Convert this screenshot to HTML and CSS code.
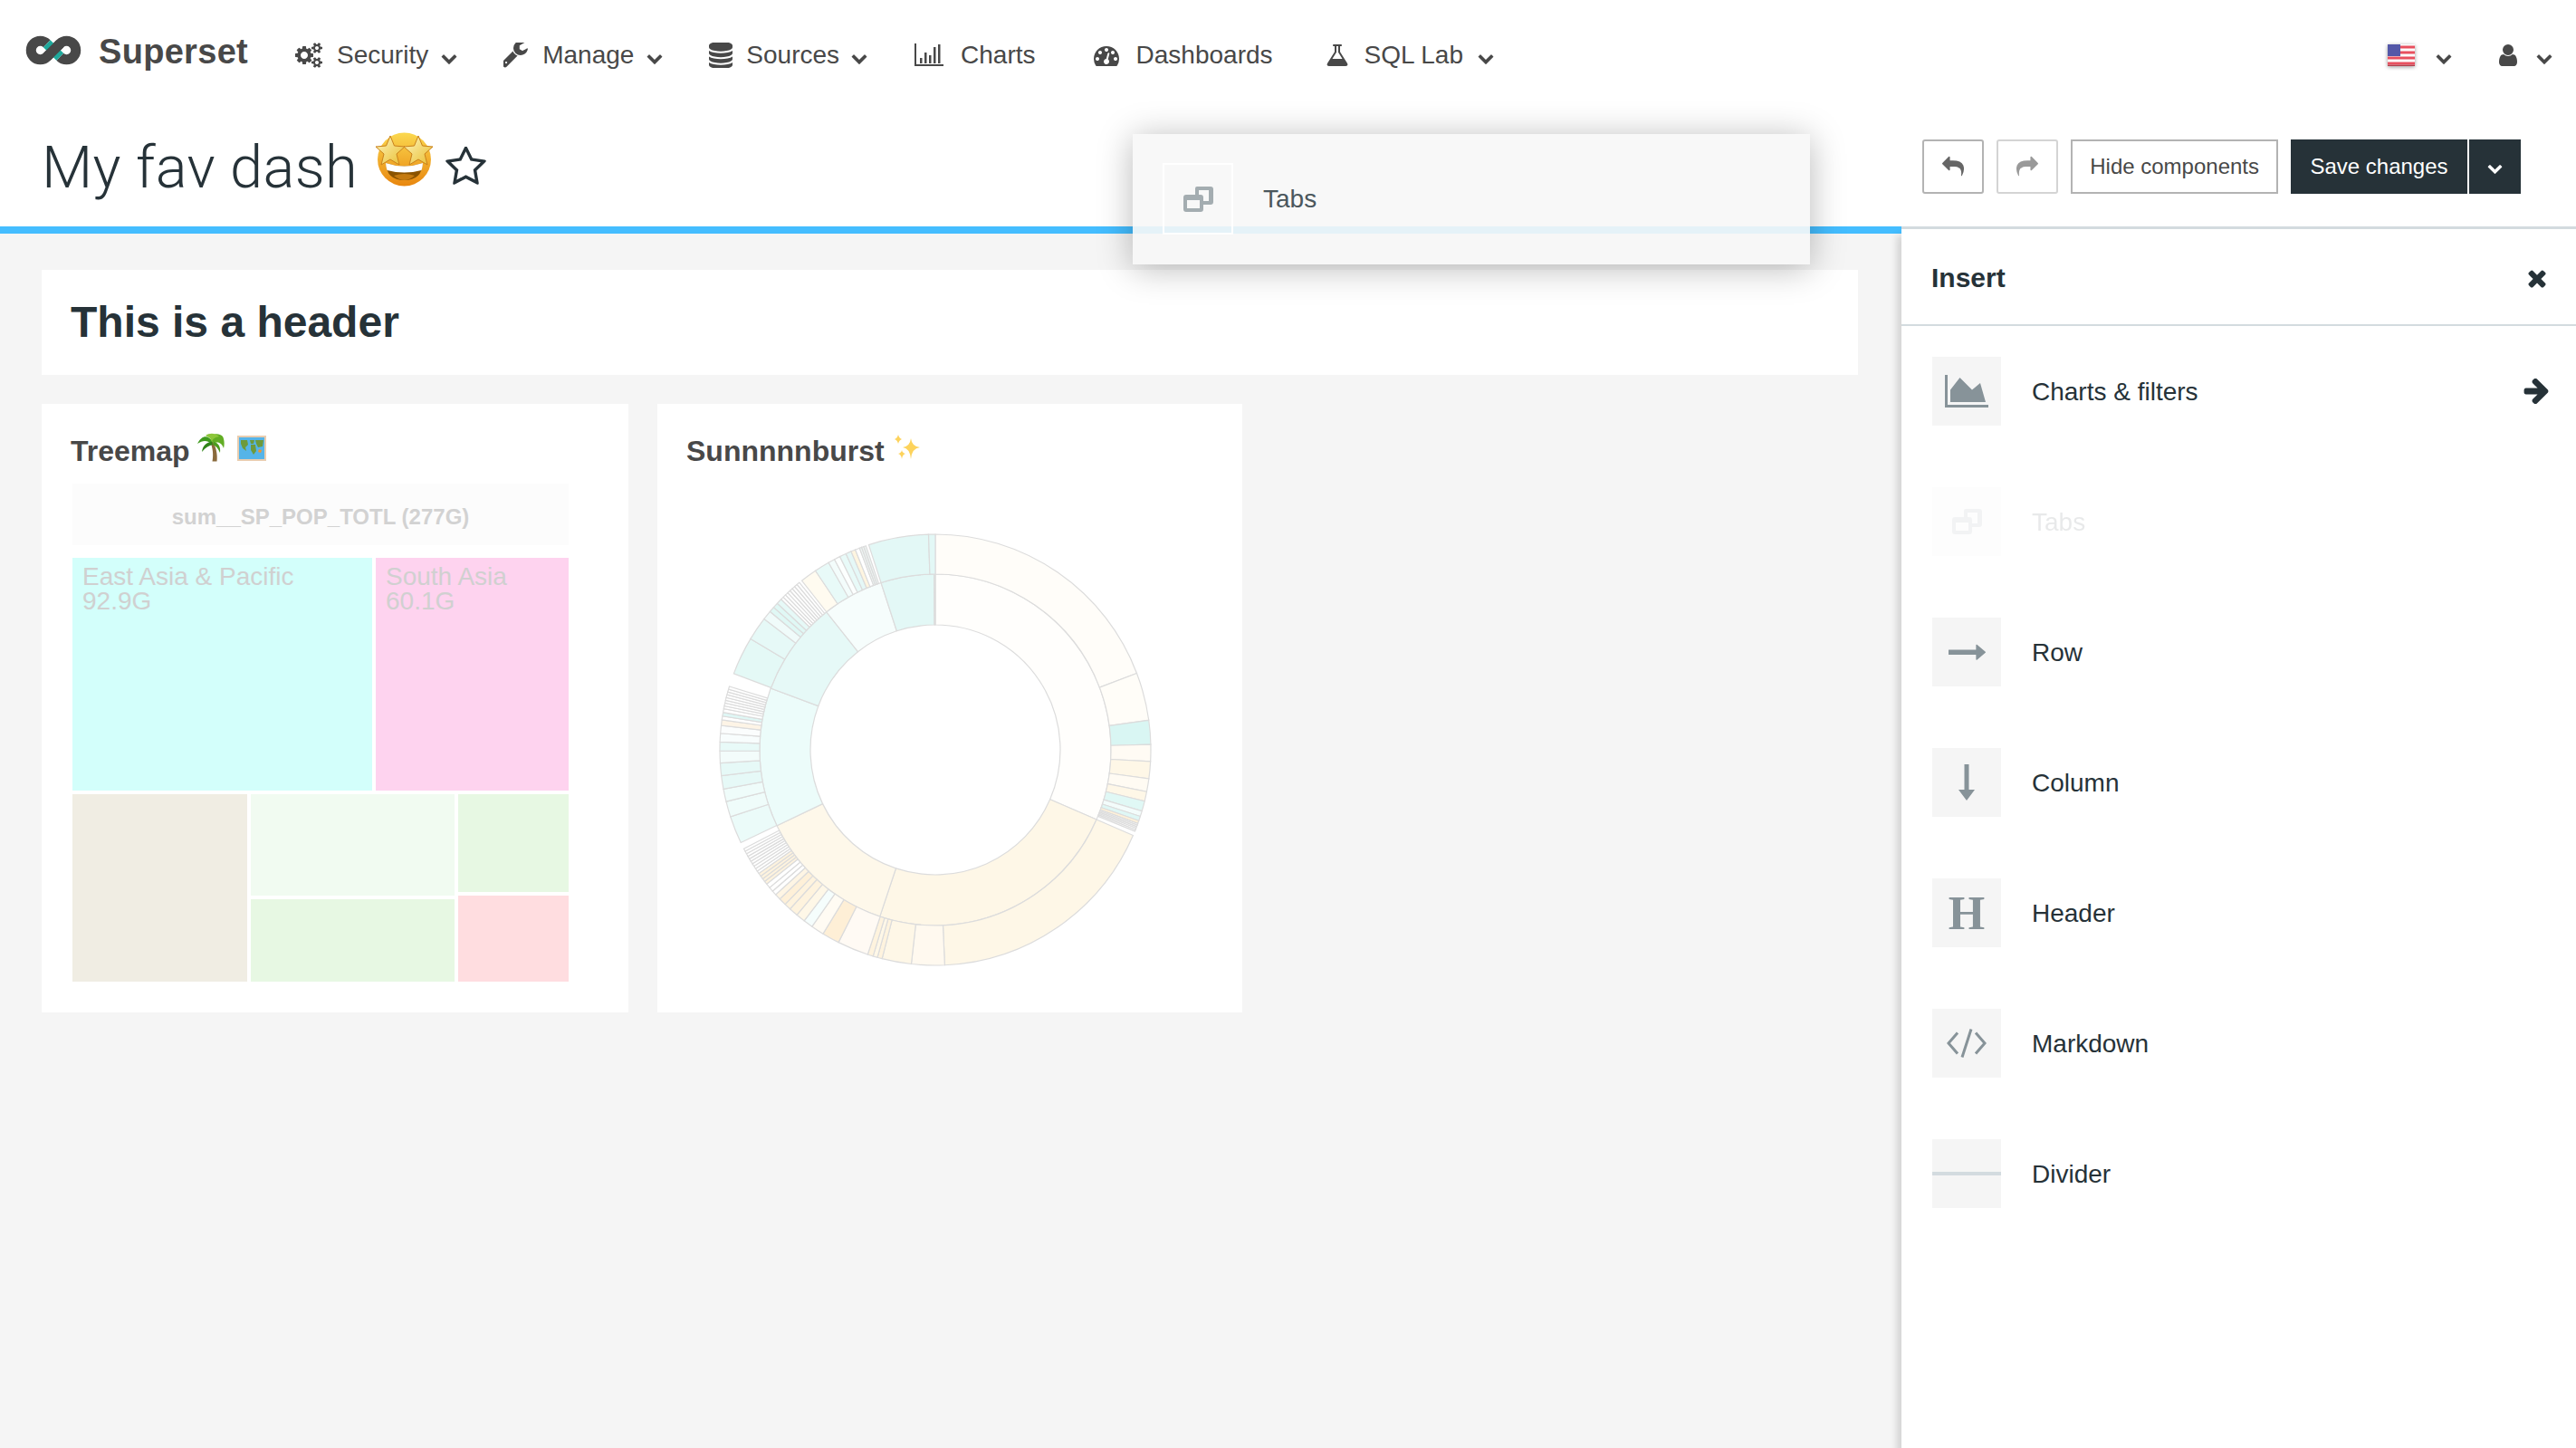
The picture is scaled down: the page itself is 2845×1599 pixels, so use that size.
FILE: index.html
```html
<!DOCTYPE html>
<html lang="en">
<head>
    <meta charset="UTF-8">
    <title>My fav dash - Superset</title>
    <link rel="stylesheet" href="styles.css">
</head>
<body>
    <svg class="sprite" xmlns="http://www.w3.org/2000/svg">
        <symbol id="i-chevron" viewBox="100 220 1592 1350"><path d="M1683 808l-742 741q-19 19-45 19t-45-19l-742-741q-19-19-19-45.5t19-45.5l166-165q19-19 45-19t45 19l531 531 531-531q19-19 45-19t45 19l166 165q19 19 19 45.5t-19 45.5z"/></symbol>
        <symbol id="i-tabs" viewBox="0 0 33 28"><path d="M15 0h15a3 3 0 0 1 3 3v14a3 3 0 0 1-3 3h-8v-4h6V4H17v5h-4V2a2 2 0 0 1 2-2z"/><path fill-rule="evenodd" d="M3 9h16a3 3 0 0 1 3 3v13a3 3 0 0 1-3 3H3a3 3 0 0 1-3-3V12a3 3 0 0 1 3-3zm1 6v9h14v-9z"/></symbol>
    </svg>

    <nav class="navbar">
        <a class="brand">
            <svg class="brand-logo" viewBox="0 0 62 33">
                <path d="M38.25 23.75A10.25 10.25 0 1 0 38.25 9.25L23.75 23.75A10.25 10.25 0 1 1 23.75 9.25" fill="none" stroke="#484848" stroke-width="11"/>
                <path d="M23.75 9.25L38.25 23.75" fill="none" stroke="#1fa99c" stroke-width="11"/>
                <path d="M38.25 9.25L23.75 23.75" fill="none" stroke="#484848" stroke-width="11"/>
            </svg>
            <span class="brand-name">Superset</span>
        </a>
        <a class="nav-item">
            <svg class="nav-icon" width="30" height="28" viewBox="0 0 1920 1792"><path d="M896 896q0-106-75-181t-181-75-181 75-75 181 75 181 181 75 181-75 75-181zm768 512q0-52-38-90t-90-38-90 38-38 90q0 53 37.5 90.5t90.5 37.5 90.5-37.5 37.5-90.5zm0-1024q0-52-38-90t-90-38-90 38-38 90q0 53 37.5 90.5t90.5 37.5 90.5-37.5 37.5-90.5zm-384 421v185q0 10-7 19.5t-16 10.5l-155 24q-11 35-32 76 34 48 90 115 7 11 7 20 0 12-7 19-23 30-82.5 89.5t-78.5 59.5q-11 0-21-7l-115-90q-37 19-77 31-11 108-23 155-7 24-30 24h-186q-11 0-20-7.5t-10-17.5l-23-153q-34-10-75-31l-118 89q-7 7-20 7-11 0-21-8-144-133-144-160 0-9 7-19 10-14 41-53t47-61q-23-44-35-82l-152-24q-10-1-17-9.5t-7-19.5v-185q0-10 7-19.5t16-10.5l155-24q11-35 32-76-34-48-90-115-7-11-7-20 0-12 7-20 22-30 82-89t79-59q11 0 21 7l115 90q34-18 77-32 11-108 23-154 7-24 30-24h186q11 0 20 7.5t10 17.5l23 153q34 10 75 31l118-89q8-7 20-7 11 0 21 8 144 133 144 160 0 8-7 19-12 16-42 54t-45 60q23 48 34 82l152 23q10 2 17 10.5t7 19.5zm640 533v140q0 16-149 31-12 27-30 52 51 113 51 138 0 4-4 7-122 71-124 71-8 0-46-47t-52-68q-20 2-30 2t-30-2q-14 21-52 68t-46 47q-2 0-124-71-4-3-4-7 0-25 51-138-18-25-30-52-149-15-149-31v-140q0-16 149-31 13-29 30-52-51-113-51-138 0-4 4-7 4-2 35-20t59-34 30-16q8 0 46 46.5t52 67.5q20-2 30-2t30 2q51-71 92-112l6-2q4 0 124 70 4 3 4 7 0 25-51 138 17 23 30 52 149 15 149 31zm0-1024v140q0 16-149 31-12 27-30 52 51 113 51 138 0 4-4 7-122 71-124 71-8 0-46-47t-52-68q-20 2-30 2t-30-2q-14 21-52 68t-46 47q-2 0-124-71-4-3-4-7 0-25 51-138-18-25-30-52-149-15-149-31v-140q0-16 149-31 13-29 30-52-51-113-51-138 0-4 4-7 4-2 35-20t59-34 30-16q8 0 46 46.5t52 67.5q20-2 30-2t30 2q51-71 92-112l6-2q4 0 124 70 4 3 4 7 0 25-51 138 17 23 30 52 149 15 149 31z"/></svg>
            <span>Security</span>
            <svg class="caret"><use href="#i-chevron"/></svg>
        </a>
        <a class="nav-item">
            <svg class="nav-icon" width="27" height="28" viewBox="150 130 1520 1520"><path d="M384 1344q0-26-19-45t-45-19-45 19-19 45 19 45 45 19 45-19 19-45zm644-420l-682 682q-37 37-90 37-52 0-91-37l-106-108q-38-36-38-90 0-53 38-91l681-681q39 98 114.5 173.5t173.5 114.5zm634-435q0 39-23 106-47 134-164.5 217.5t-258.5 83.5q-185 0-316.5-131.5t-131.5-316.5 131.5-316.5 316.5-131.5q58 0 121.5 16.5t107.5 46.5q16 11 16 28t-16 28l-293 169v224l193 107q5-3 79-48.5t135.5-81 70.5-35.5q15 0 23.5 10t8.5 25z"/></svg>
            <span>Manage</span>
            <svg class="caret"><use href="#i-chevron"/></svg>
        </a>
        <a class="nav-item nav-db">
            <svg class="nav-icon" width="26" height="28" viewBox="128 128 1536 1536"><path d="M896 768q237 0 443-43t325-127v170q0 69-103 128t-280 93.5-385 34.5-385-34.5-280-93.5-103-128v-170q119 84 325 127t443 43zm0 768q237 0 443-43t325-127v170q0 69-103 128t-280 93.5-385 34.5-385-34.5-280-93.5-103-128v-170q119 84 325 127t443 43zm0-384q237 0 443-43t325-127v170q0 69-103 128t-280 93.5-385 34.5-385-34.5-280-93.5-103-128v-170q119 84 325 127t443 43zm0-1152q208 0 385 34.5t280 93.5 103 128v128q0 69-103 128t-280 93.5-385 34.5-385-34.5-280-93.5-103-128v-128q0-69 103-128t280-93.5 385-34.5z"/></svg>
            <span>Sources</span>
            <svg class="caret"><use href="#i-chevron"/></svg>
        </a>
        <a class="nav-item nav-plain">
            <svg class="nav-icon" width="32" height="25" viewBox="0 0 32 25"><path d="M0 0h2v23h30v2H0z"/><path d="M6 16h2.500v6H6zM11 10h2.500v12H11zM16 13h2.500v9H16zM21 4h2.500v18H21zM26 1h2.500v21H26z"/></svg>
            <span>Charts</span>
        </a>
        <a class="nav-item nav-plain">
            <svg class="nav-icon" width="28" height="24" viewBox="0 128 1792 1536"><path d="M384 1152q0-53-37.5-90.5t-90.5-37.5-90.5 37.5-37.5 90.5 37.5 90.5 90.5 37.5 90.5-37.5 37.5-90.5zm192-448q0-53-37.5-90.5t-90.5-37.5-90.5 37.5-37.5 90.5 37.5 90.5 90.5 37.5 90.5-37.5 37.5-90.5zm428 481l101-382q6-26-7.5-48.5t-38.5-29.5-48 6.5-30 39.5l-101 382q-60 5-107 43.5t-63 98.5q-20 77 20 146t117 89 146-20 89-117q16-60-6-117t-72-91zm660-33q0-53-37.5-90.5t-90.5-37.5-90.5 37.5-37.5 90.5 37.5 90.5 90.5 37.5 90.5-37.5 37.5-90.5zm-640-640q0-53-37.5-90.5t-90.5-37.5-90.5 37.5-37.5 90.5 37.5 90.5 90.5 37.5 90.5-37.5 37.5-90.5zm448 192q0-53-37.5-90.5t-90.5-37.5-90.5 37.5-37.5 90.5 37.5 90.5 90.5 37.5 90.5-37.5 37.5-90.5zm320 448q0 261-141 483-19 29-54 29h-1402q-35 0-54-29-141-221-141-483 0-182 71-348t191-286 286-191 348-71 348 71 286 191 191 286 71 348z"/></svg>
            <span>Dashboards</span>
        </a>
        <a class="nav-item nav-lab">
            <svg class="nav-icon" width="24" height="26" viewBox="130 128 1532 1536"><path d="M1591 1448q56 89 21.500 152.500t-140.500 63.500h-1152q-106 0-140.500-63.500t21.500-152.500l503-793v-399h-64q-26 0-45-19t-19-45 19-45 45-19h512q26 0 45 19t19 45-19 45-45 19h-64v399zm-779-725l-272 429h712l-272-429-20-31v-437h-128v437z"/></svg>
            <span>SQL Lab</span>
            <svg class="caret"><use href="#i-chevron"/></svg>
        </a>
        <a class="nav-item nav-lang">
            <svg class="flag" width="30" height="24" viewBox="0 0 30 24">
                <rect width="30" height="24" fill="#fdfdfd"/>
                <path d="M0 1.500h30v3H0zM0 7.500h30v3H0zM0 13.500h30v3H0zM0 19.500h30v3H0z" fill="#e8505f"/>
                <rect width="14" height="13" fill="#5458a8"/>
                <rect y="22.500" width="30" height="1.500" fill="#b33d4a"/>
            </svg>
            <svg class="caret"><use href="#i-chevron"/></svg>
        </a>
        <a class="nav-item nav-user">
            <svg class="nav-icon" width="20" height="24" viewBox="256 128 1280 1536"><path d="M1536 1399q0 109-62.500 187t-150.500 78h-854q-88 0-150.500-78t-62.500-187q0-85 8.500-160.500t31.500-152 58.500-131 94-89 134.500-34.500q131 128 313 128t313-128q76 0 134.500 34.500t94 89 58.500 131 31.500 152 8.500 160.500zm-256-887q0 159-112.500 271.500t-271.500 112.500-271.500-112.500-112.500-271.500 112.500-271.500 271.500-112.500 271.500 112.500 112.500 271.500z"/></svg>
            <svg class="caret"><use href="#i-chevron"/></svg>
        </a>
    </nav>

    <header class="dash-header">
        <div class="dash-title">
            <h1>My fav dash</h1>
            <svg class="emoji-face" width="63" height="60" viewBox="0 0 63 60">
                <defs>
                    <linearGradient id="face" x1="0" y1="0" x2="0" y2="1"><stop offset="0" stop-color="#fbd84f"/><stop offset="1" stop-color="#e8860e"/></linearGradient>
                    <linearGradient id="starfill" x1="0" y1="0" x2="1" y2="1"><stop offset="0" stop-color="#fdf6c0"/><stop offset="1" stop-color="#e9bd2e"/></linearGradient>
                </defs>
                <circle cx="31.500" cy="30" r="29.500" fill="url(#face)"/>
                <path d="M11 34Q31.500 41 52 34Q51 53 31.500 53Q12 53 11 34Z" fill="#8a5300"/>
                <path d="M11 34Q31.500 41 52 34Q52 38 50.500 42Q31.500 47 12.500 42Q11 38 11 34Z" fill="#fff"/>
                <path d="M20 48Q31.500 44 43 48Q37 53 31.500 53Q26 53 20 48Z" fill="#c47a10"/>
                <path d="M16 4L20.500 15 32 16 23 24 26 36 16 30 6 36 9 24 0 16 11.500 15Z" fill="url(#starfill)" stroke="#c9811c" stroke-width="1"/>
                <path d="M47 4L51.500 15 63 16 54 24 57 36 47 30 37 36 40 24 31 16 42.500 15Z" fill="url(#starfill)" stroke="#c9811c" stroke-width="1"/>
            </svg>
            <svg class="star-icon" width="45" height="43" viewBox="0 64 1664 1600"><path d="M1137 1004l306-297-422-62-189-382-189 382-422 62 306 297-73 421 378-199 377 199zm527-357q0 22-26 48l-363 354 86 500q1 7 1 20 0 50-41 50-19 0-40-12l-449-236-449 236q-22 12-40 12-21 0-31.500-14.500t-10.500-35.500q0-6 2-20l86-500-364-354q-25-27-25-48 0-37 56-46l502-73 225-455q19-41 49-41t49 41l225 455 502 73q56 9 56 46z"/></svg>
        </div>
        <div class="dash-actions">
            <button class="btn btn-icon"><svg width="24" height="24" viewBox="0 128 1792 1536"><path d="M1792 1120q0 166-127 451-3 7-10.500 24t-13.500 30-13 22q-12 17-28 17-15 0-23.500-10t-8.500-25q0-9 2.500-26.500t2.500-23.500q5-68 5-123 0-101-17.500-181t-48.500-138.500-80-101-105.500-69.500-133-42.500-154-21.500-175.500-6h-224v256q0 26-19 45t-45 19-45-19l-512-512q-19-19-19-45t19-45l512-512q19-19 45-19t45 19 19 45v256h224q713 0 875 403 53 134 53 333z"/></svg></button>
            <button class="btn btn-icon btn-off"><svg class="flip" width="24" height="24" viewBox="0 128 1792 1536"><path d="M1792 1120q0 166-127 451-3 7-10.500 24t-13.500 30-13 22q-12 17-28 17-15 0-23.500-10t-8.500-25q0-9 2.500-26.500t2.500-23.500q5-68 5-123 0-101-17.500-181t-48.500-138.500-80-101-105.500-69.500-133-42.500-154-21.500-175.500-6h-224v256q0 26-19 45t-45 19-45-19l-512-512q-19-19-19-45t19-45l512-512q19-19 45-19t45 19 19 45v256h224q713 0 875 403 53 134 53 333z"/></svg></button>
            <button class="btn">Hide components</button>
            <div class="save-group">
                <button class="btn-save">Save changes</button>
                <button class="btn-save-more"><svg class="caret-small"><use href="#i-chevron"/></svg></button>
            </div>
        </div>
    </header>

    <div class="drag-preview">
        <div class="drag-icon"><svg width="33" height="28"><use href="#i-tabs"/></svg></div>
        <span>Tabs</span>
    </div>

    <div class="builder">
        <main class="grid">
            <div class="header-block">This is a header</div>
            <div class="chart-row">
                <section class="slice">
                    <h2 class="slice-title">Treemap
                        <svg class="emoji-palm" width="30" height="32" viewBox="0 0 30 32">
                            <path d="M14 10C17 16 18 24 16.500 31.500L21.500 31.500C22.500 24 20.500 15 17 10Z" fill="#8a6a3c"/>
                            <path d="M17 10C12 2 5 2 0 12 6 8 11 8 15 12Z" fill="#3f9a1e"/>
                            <path d="M16 9C14 1 23 -1 28 4 30 8 30 13 29 17 27 11 22 9 18 12Z" fill="#62ad24"/>
                            <path d="M16 10C10 10 6 14 5 21 9 16 13 14 17 13Z" fill="#2f8418"/>
                            <path d="M18 10C23 11 26 15 25 22 23 17 20 14 17 13Z" fill="#4c9c1e"/>
                            <path d="M9 3C13 0 20 0 24 4 20 5 17 6 16 10 15 6 13 5 9 3Z" fill="#8cc63a"/>
                        </svg>
                        <svg class="emoji-map" width="32" height="28" viewBox="0 0 32 28">
                            <rect width="32" height="28" fill="#e9cdb0"/>
                            <rect x="2" y="2" width="28" height="24" fill="#55b4e8"/>
                            <path d="M4 5h7l1 5-3 3 1 4-4-3-2-5zM14 5h5l-1 4-3 0zM15 10h5l1 7-3 4-3-5zM20 5h9l-1 7-5 1-2-4z" fill="#6d9a3c"/>
                            <path d="M24 15l3 1-1 3-3-1z" fill="#f0952c"/>
                        </svg>
                    </h2>
                    <div class="treemap">
                        <div class="treemap-title">sum__SP_POP_TOTL (277G)</div>
                        <div class="treemap-row-top">
                            <div class="cell cell-cyan">East Asia &amp; Pacific<br>92.9G</div>
                            <div class="cell cell-pink">South Asia<br>60.1G</div>
                        </div>
                        <div class="treemap-row-bottom">
                            <div class="cell cell-beige"></div>
                            <div class="treemap-col col-mid">
                                <div class="cell cell-mint mid-a"></div>
                                <div class="cell cell-green mid-b"></div>
                            </div>
                            <div class="treemap-col col-end">
                                <div class="cell cell-green end-a"></div>
                                <div class="cell cell-rose end-b"></div>
                            </div>
                        </div>
                    </div>
                </section>
                <section class="slice slice-sun">
                    <h2 class="slice-title">Sunnnnnburst
                        <svg class="emoji-spark" width="28" height="28" viewBox="0 0 28 28">
                            <path d="M18 4Q19 13 28 14Q19 15 18 27Q17 15 9 14Q17 13 18 4Z" fill="#fdd35c"/>
                            <path d="M4 0Q5 4 8 5Q5 6 4 10Q3 6 0 5Q3 4 4 0Z" fill="#fdd35c"/>
                            <path d="M8 17Q8.500 20 12 21Q8.500 22 8 27Q7.500 22 4 21Q7.500 20 8 17Z" fill="#fdd35c"/>
                        </svg>
                    </h2>
                    <svg id="sunburst" class="sunburst" width="480" height="480" viewBox="-240 -240 480 480"></svg>
                </section>
            </div>
        </main>

        <aside class="insert-panel">
            <div class="panel-head">
                <span>Insert</span>
                <svg width="24" height="24" viewBox="150 200 1492 1392"><path d="M1490 1322q0 40-28 68l-136 136q-28 28-68 28t-68-28l-294-294-294 294q-28 28-68 28t-68-28l-136-136q-28-28-28-68t28-68l294-294-294-294q-28-28-28-68t28-68l136-136q28-28 68-28t68 28l294 294 294-294q28-28 68-28t68 28l136 136q28 28 28 68t-28 68l-294 294 294 294q28 28 28 68z" fill="#263238"/></svg>
            </div>
            <ul class="panel-list">
                <li class="panel-item">
                    <div class="panel-icon"><svg width="48" height="38" viewBox="0 128 2048 1536"><path d="M2048 1536v128h-2048v-1536h128v1408h1920zm-384-1024l256 896h-1664v-576l448-576 576 576z"/></svg></div>
                    <span>Charts &amp; filters</span>
                    <svg class="panel-arrow" width="28" height="28" viewBox="128 128 1472 1536"><path d="M1600 960q0 54-37 91l-651 651q-39 37-91 37-51 0-90-37l-75-75q-38-38-38-91t38-91l293-293h-704q-52 0-84.500-37.500t-32.500-90.500v-128q0-53 32.500-90.500t84.500-37.500h704l-293-294q-38-36-38-90t38-90l75-75q38-38 90-38 53 0 91 38l651 651q37 35 37 90z" transform="translate(0 -64)"/></svg>
                </li>
                <li class="panel-item panel-faded">
                    <div class="panel-icon"><svg width="33" height="28"><use href="#i-tabs"/></svg></div>
                    <span>Tabs</span>
                </li>
                <li class="panel-item">
                    <div class="panel-icon"><svg width="41" height="18" viewBox="0 480 1728 810" preserveAspectRatio="none"><path d="M1728 893q0 14-10 24l-384 354q-16 14-35 6-19-9-19-29v-224h-1248q-14 0-23-9t-9-23v-192q0-14 9-23t23-9h1248v-224q0-21 19-29t35 5l384 350q10 10 10 23z"/></svg></div>
                    <span>Row</span>
                </li>
                <li class="panel-item">
                    <div class="panel-icon"><svg width="18" height="40" viewBox="0 0 18 40"><path d="M6.500 0h5v28H18l-9 12-9-12h6.500z"/></svg></div>
                    <span>Column</span>
                </li>
                <li class="panel-item">
                    <div class="panel-icon panel-h">H</div>
                    <span>Header</span>
                </li>
                <li class="panel-item">
                    <div class="panel-icon"><svg width="44" height="32" viewBox="0 0 44 32"><path d="M12 4.500L2 16l10 11.500M32 4.500L42 16 32 27.500M27 0.500L17 31.500" fill="none" stroke="#879399" stroke-width="3"/></svg></div>
                    <span>Markdown</span>
                </li>
                <li class="panel-item">
                    <div class="panel-icon panel-divider"></div>
                    <span>Divider</span>
                </li>
            </ul>
        </aside>
    </div>

    <script src="sunburst.js"></script>
</body>
</html>
```

FILE: styles.css
```css
* {
    box-sizing: border-box;
}
html, body {
    margin: 0;
    height: 100%;
    overflow: hidden;
}
body {
    position: relative;
    font-family: "Liberation Sans", Arial, sans-serif;
    font-size: 28px;
    color: #484848;
    background: #f5f5f5;
}
.sprite {
    position: absolute;
    width: 0;
    height: 0;
}

/* top nav */
.navbar {
    display: flex;
    align-items: center;
    height: 125px;
    padding: 0 25px 4px 28px;
    background: #fff;
}
.brand {
    display: flex;
    align-items: center;
    gap: 19px;
    margin: 0 52px 10px 0;
}
.brand-logo {
    width: 62px;
    height: 33px;
}
.brand-name {
    padding-top: 3px;
    font-size: 38px;
    font-weight: bold;
    letter-spacing: 0.3px;
}
.nav-item {
    display: flex;
    align-items: center;
    gap: 16px;
    margin-right: 50px;
    white-space: nowrap;
}
.nav-item svg {
    fill: #484848;
    flex: none;
}
.caret {
    width: 20px;
    height: 14px;
    margin: 6px 0 0 -3px;
}
.nav-db {
    gap: 15px;
    margin-right: 51px;
}
.nav-plain {
    gap: 19px;
    padding-right: 14px;
}
.nav-lab {
    gap: 18px;
    margin-left: -5px;
}
.nav-lang {
    margin: 0 51px 0 auto;
    gap: 25px;
}
.nav-user {
    gap: 23px;
    margin-right: 0;
}
.flag {
    filter: drop-shadow(0 1px 2px rgba(0,0,0,0.4));
}

/* dashboard title row */
.dash-header {
    display: flex;
    justify-content: space-between;
    height: 125px;
    padding: 23px 61px 0 46px;
    background: #fff;
}
.dash-title {
    display: flex;
    align-items: center;
    height: 64px;
}
.dash-title h1 {
    margin: 9px 0 0;
    font-family: Roboto, "Liberation Sans", sans-serif;
    font-size: 65px;
    font-weight: 300;
    letter-spacing: 0.3px;
    color: #263238;
    white-space: nowrap;
}
.emoji-face {
    margin: -8px 0 0 20px;
}
.star-icon {
    margin: 6px 0 0 14px;
    fill: #263238;
}
.dash-actions {
    display: flex;
    gap: 14px;
    padding-top: 6px;
}
.btn {
    height: 60px;
    padding: 0 19px;
    background: #fff;
    border: 2px solid #b3b3b3;
    font-family: "Liberation Sans", Arial, sans-serif;
    font-size: 24px;
    color: #484848;
}
.btn-icon {
    width: 68px;
    padding: 0;
    border-radius: 3px;
}
.btn-icon svg {
    display: block;
    margin: 0 auto;
    fill: #666;
}
.btn-off {
    border-color: #d4d4d4;
}
.btn-off svg {
    fill: #999;
}
.flip {
    transform: scaleX(-1);
}
.save-group {
    display: flex;
}
.btn-save, .btn-save-more {
    height: 60px;
    border: 0;
    background: #263238;
    color: #fff;
    font-family: "Liberation Sans", Arial, sans-serif;
    font-size: 24px;
}
.btn-save {
    width: 197px;
    padding: 0;
    border-right: 2px solid #fff;
}
.btn-save-more {
    width: 57px;
    padding: 0;
}
.caret-small {
    display: block;
    width: 19px;
    height: 13px;
    margin: 3px auto 0;
    fill: #fff;
}

/* dragged component, floats over everything */
.drag-preview {
    position: absolute;
    left: 1251px;
    top: 148px;
    z-index: 5;
    display: flex;
    align-items: center;
    gap: 33px;
    width: 748px;
    height: 144px;
    padding: 32px 33px 33px;
    background: rgba(247,247,247,0.9);
    box-shadow: 0 4px 36px rgba(0,0,0,0.28);
    color: #4b575d;
}
.drag-icon {
    display: flex;
    align-items: center;
    justify-content: center;
    width: 78px;
    height: 79px;
    border: 2px solid #fff;
    fill: #a4adb1;
}
.drag-preview span {
    margin-top: 1px;
}

/* layout under the header */
.builder {
    display: flex;
    height: 1349px;
    border-top: 8px solid #44bdff;
}
.grid {
    flex: none;
    width: 2100px;
    padding: 40px 48px 0 46px;
}
.header-block {
    height: 116px;
    padding-left: 32px;
    background: #fff;
    font-size: 48px;
    font-weight: bold;
    line-height: 116px;
    color: #263238;
}
.chart-row {
    display: flex;
    gap: 32px;
    margin-top: 32px;
}
.slice {
    width: 648px;
    height: 672px;
    padding: 32px 32px 0;
    background: #fff;
}
.slice-sun {
    width: 646px;
}
.slice-title {
    display: flex;
    align-items: center;
    height: 40px;
    margin: 0;
    font-size: 32px;
    font-weight: bold;
    color: #484848;
}
.emoji-palm {
    margin: -8px 0 0 8px;
}
.emoji-map {
    margin: -6px 0 0 14px;
}
.emoji-spark {
    margin: -8px 0 0 11px;
}

/* treemap */
.treemap {
    width: 548px;
    margin: 16px 0 0 2px;
}
.treemap-title {
    height: 68px;
    background: #fcfcfc;
    font-size: 24px;
    font-weight: bold;
    line-height: 74px;
    text-align: center;
    color: #d2d2d2;
}
.treemap-row-top {
    display: flex;
    gap: 4px;
    height: 257px;
    margin-top: 14px;
}
.treemap-row-bottom {
    display: flex;
    gap: 4px;
    height: 207px;
    margin-top: 4px;
}
.treemap-col {
    display: flex;
    flex-direction: column;
    gap: 4px;
}
.cell {
    padding: 7px 11px;
    font-size: 28px;
    line-height: 27px;
    color: #d0d0d0;
}
.cell-cyan {
    width: 331px;
    background: #d3fffb;
}
.cell-pink {
    width: 213px;
    background: #fed3ef;
}
.cell-beige {
    width: 193px;
    background: #f0ede3;
}
.cell-mint {
    background: #f1fbf1;
}
.cell-green {
    background: #e7f8e3;
}
.cell-rose {
    background: #ffdde0;
}
.col-mid {
    width: 225px;
}
.col-end {
    width: 122px;
}
.mid-a {
    height: 112px;
}
.mid-b {
    height: 91px;
}
.end-a {
    height: 108px;
}
.end-b {
    height: 95px;
}

/* sunburst */
.sunburst {
    display: block;
    margin: 70px 0 0 35px;
}
.sunburst path {
    stroke: #dcdcdc;
    stroke-width: 1.2;
}

/* insert panel */
.insert-panel {
    position: relative;
    flex: none;
    width: 745px;
    margin-top: -8px;
    background: #fff;
    border-top: 3px solid #d3dbdf;
    box-shadow: -5px 10px 8px rgba(0,0,0,0.14);
}
.panel-head {
    display: flex;
    align-items: center;
    justify-content: space-between;
    height: 107px;
    padding: 2px 31px 0 33px;
    border-bottom: 2px solid #d3dbdf;
    font-size: 30px;
    font-weight: bold;
    color: #263238;
}
.panel-list {
    list-style: none;
    margin: 0;
    padding: 34px 30px 0 34px;
}
.panel-item {
    display: flex;
    align-items: center;
    gap: 34px;
    height: 76px;
    margin-bottom: 68px;
    color: #263238;
}
.panel-item > span {
    padding-top: 2px;
}
.panel-icon {
    display: flex;
    align-items: center;
    justify-content: center;
    width: 76px;
    height: 76px;
    background: #f5f5f5;
    fill: #879399;
}
.panel-arrow {
    margin-left: auto;
    fill: #263238;
}
.panel-faded {
    opacity: 0.1;
}
.panel-h {
    font-family: "Liberation Serif", serif;
    font-size: 52px;
    font-weight: bold;
    color: #879399;
}
.panel-divider {
    background: linear-gradient(#f5f5f5 36px, #d3dbdf 36px, #d3dbdf 40px, #f5f5f5 40px);
}
```

FILE: sunburst.js
```js
// [from, to, color, count] in degrees, clockwise from the top
var inner = [
    [0, 113.4, '#fffefc'], [113.4, 198.4, '#fef7e7'], [198.4, 244.4, '#fef8ea'],
    [244.4, 290.5, '#ecfcfa'], [290.5, 321.7, '#e6f9f7'], [321.7, 342, '#f6fdfc'],
    [342, 359.6, '#e3f8f6'], [359.6, 360, '#e3f8f6']
];
var outer = [
    [0, 69.2, '#fffdf9'], [69.2, 82.1, '#fffdf8'], [82.1, 88.6, '#d9f6f3'], [88.6, 93.1, '#fffbf4'],
    [93.1, 97.7, '#fef7e7'], [97.7, 101.2, '#fffbf3'], [101.2, 103.8, '#fef7e7'], [103.8, 106.5, '#e0f8f5'],
    [106.5, 108, '#f3fcfb'], [108, 109.2, '#dff7f5'], [109.2, 110, '#fef0d8'], [110, 112.2, '#fff', 5],

    [113.4, 177.5, '#fef7e7'], [177.5, 186.4, '#fff9ef'], [186.4, 194.3, '#fef7e7'], [194.3, 195.6, '#fef3de'],
    [195.6, 196.8, '#fef7e7'], [196.8, 198.3, '#fef3de'], [198.3, 206.7, '#fffaf4'], [206.7, 211.4, '#feefd6'],
    [211.4, 214.9, '#fffbf3'], [214.9, 217.5, '#f5fdfc'], [217.5, 220, '#fef7e7'], [220, 222.4, '#fef3de'],
    [222.4, 224.2, '#fef3de'], [224.2, 226.2, '#fef0d8'], [226.2, 227.8, '#fef5e4'], [227.8, 231.5, '#fff', 3],
    [231.5, 235, '#fef3de', 4], [235, 242.7, '#fff', 10],

    [244.5, 251.9, '#ebfbf9'], [251.9, 256.1, '#effcfa'], [256.1, 259.5, '#effcfa'], [259.5, 263.1, '#e6f9f7'],
    [263.1, 266.5, '#e6f9f7'], [266.5, 269.7, '#f3fcfb'], [269.7, 272.1, '#e8faf8'], [272.1, 274.4, '#f8fdfd'],
    [274.4, 276.5, '#fbfdfd'], [276.5, 278, '#fdf4e6'], [278, 279, '#fff'], [279, 280, '#dff7f5'],
    [280, 281, '#fff'], [281, 287.1, '#fff', 8],

    [290.7, 301, '#e4f9f6'], [301, 307.4, '#e6f9f7'], [307.4, 309.9, '#f0fbfa'], [309.9, 311.4, '#e0f8f5'],
    [311.4, 312.8, '#e0f8f5'], [312.8, 314.3, '#e6f9f7'], [314.3, 320.9, '#fff', 8],

    [321.7, 326.2, '#fffbf0'], [326.2, 330.3, '#e8faf8'], [330.3, 332.1, '#f3fcfb'], [332.1, 333.7, '#fcfffe'],
    [333.7, 335.5, '#e8faf8'], [335.5, 337, '#e5f8f7'], [337, 338.2, '#fef5e0'], [338.2, 339.4, '#fff'],
    [339.4, 341.2, '#eef5f3', 3],

    [342, 358.2, '#e3f8f6'], [358.2, 360, '#e3f8f6']
];

function point(r, deg) {
    var a = deg * Math.PI / 180;
    return (r * Math.sin(a)).toFixed(2) + ' ' + (-r * Math.cos(a)).toFixed(2);
}

function arcPath(r0, r1, from, to) {
    var large = to - from > 180 ? 1 : 0;
    return 'M' + point(r0, from) + 'L' + point(r1, from) +
        'A' + r1 + ' ' + r1 + ' 0 ' + large + ' 1 ' + point(r1, to) +
        'L' + point(r0, to) +
        'A' + r0 + ' ' + r0 + ' 0 ' + large + ' 0 ' + point(r0, from) + 'Z';
}

function drawRing(svg, list, r0, r1) {
    list.forEach(function (s) {
        var count = s[3] || 1;
        var step = (s[1] - s[0]) / count;
        for (var i = 0; i < count; i++) {
            var p = document.createElementNS('http://www.w3.org/2000/svg', 'path');
            p.setAttribute('d', arcPath(r0, r1, s[0] + i * step, s[0] + (i + 1) * step));
            p.setAttribute('fill', s[2]);
            svg.appendChild(p);
        }
    });
}

var svg = document.getElementById('sunburst');
drawRing(svg, inner, 138, 194);
drawRing(svg, outer, 194, 238);
```
